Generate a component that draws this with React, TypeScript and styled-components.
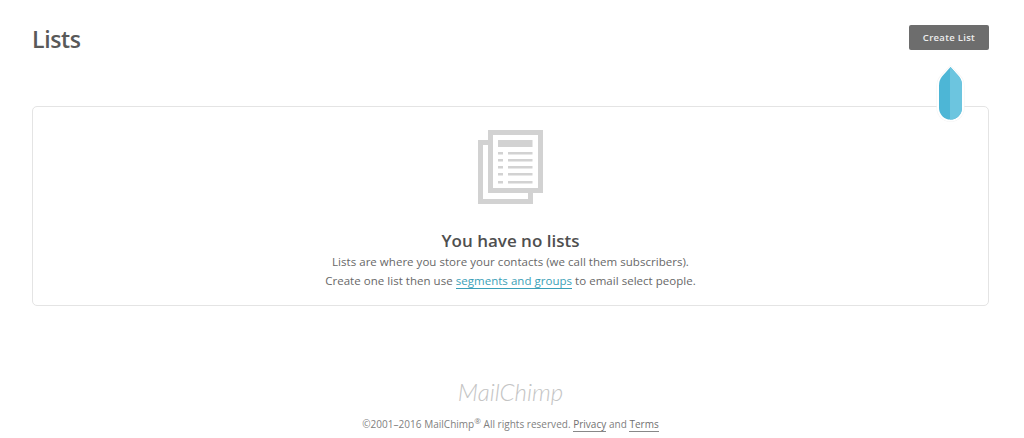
import React from 'react';
import styled, { createGlobalStyle } from 'styled-components';

const GlobalStyle = createGlobalStyle`
  html, body {
    margin: 0;
    padding: 0;
    background: #fff;
    font-family: "Open Sans", "Liberation Sans", sans-serif;
    color: #5a5a5a;
  }
`;

const Page = styled.div`
  position: relative;
  width: 1024px;
  height: 438px;
  overflow: hidden;
  box-sizing: border-box;
  padding: 25px 35px 0 32px;
`;

const Header = styled.header`
  display: flex;
  justify-content: space-between;
  align-items: center;
  height: 25px;
`;

const Title = styled.h1`
  margin: 2px 0 0;
  font-size: 23px;
  line-height: 28px;
  font-weight: 600;
  letter-spacing: -0.35px;
  color: #595959;
`;

const CreateButton = styled.button`
  width: 80px;
  height: 25px;
  border: 0;
  border-radius: 2px;
  background: #6d6d6d;
  color: #eeeeee;
  font-family: inherit;
  font-size: 9.500px;
  font-weight: 600;
  letter-spacing: 0.3px;
  padding: 0;
`;

const Pin = styled.svg`
  position: absolute;
  left: 936px;
  top: 65px;
`;

const Card = styled.section`
  margin-top: 56px;
  height: 200px;
  box-sizing: border-box;
  border: 1px solid #e4e4e4;
  border-radius: 5px;
  padding-top: 23px;
  display: flex;
  flex-direction: column;
  align-items: center;
`;

const EmptyIcon = styled.svg`
  display: block;
  margin-left: 1px;
`;

const Heading = styled.h2`
  margin: 24px 0 0;
  font-size: 17px;
  line-height: 25px;
  font-weight: 600;
  color: #4f4f4f;
`;

const Body = styled.p`
  margin: -1px 0 0;
  font-size: 11.5px;
  line-height: 19px;
  text-align: center;
  color: #686868;
  letter-spacing: 0.03px;
`;

const TealLink = styled.a`
  color: #3a9fb8;
  border-bottom: 1px solid #3a9fb8;
`;

const Footer = styled.footer`
  margin-top: 71px;
  display: flex;
  flex-direction: column;
  align-items: center;
`;

const Wordmark = styled.div`
  font-family: "Lato", sans-serif;
  font-style: italic;
  font-weight: 300;
  font-size: 24px;
  line-height: 30px;
  color: #c4c4c4;
`;

const Legal = styled.p`
  margin: 9px 0 0;
  font-size: 10px;
  line-height: 16px;
  color: #808080;
  letter-spacing: 0.02px;

  sup {
    font-size: 8px;
    line-height: 0;
  }
`;

const LegalLink = styled.a`
  color: #707070;
  border-bottom: 1px solid #888;
`;

const rows = [22, 29, 36, 43, 51];

const App: React.FC = () => {
  return (
    <Page>
      <GlobalStyle />
      <Header>
        <Title>Lists</Title>
        <CreateButton>Create List</CreateButton>
      </Header>
      <Card>
        <EmptyIcon width="66" height="74" viewBox="0 0 66 74">
          <path d="M10 12.500H2.500V71.500H52.500V63" fill="none" stroke="#d2d2d2" strokeWidth="5" />
          <rect x="12.500" y="2.500" width="50" height="58" fill="#fff" stroke="#d2d2d2" strokeWidth="5" />
          <rect x="20" y="10" width="34.500" height="7" fill="#d2d2d2" />
          {rows.map(y => (
            <g key={y} fill="#d2d2d2">
              <rect x="20" y={y} width="5" height="2.500" />
              <rect x="30" y={y} width="24.500" height="2.500" />
            </g>
          ))}
        </EmptyIcon>
        <Heading>You have no lists</Heading>
        <Body>
          Lists are where you store your contacts (we call them subscribers).
          <br />
          Create one list then use <TealLink>segments and groups</TealLink> to email select people.
        </Body>
      </Card>
      <Footer>
        <Wordmark>MailChimp</Wordmark>
        <Legal>
          ©2001–2016 MailChimp<sup>®</sup> All rights reserved. <LegalLink>Privacy</LegalLink> and <LegalLink>Terms</LegalLink>
        </Legal>
      </Footer>
      <Pin width="30" height="60" viewBox="0 0 30 60">
        <path d="M14.500 0L25 11Q28.500 15 28.500 21V43A14 14 0 0 1 0.500 43V21Q0.500 15 4 11Z" fill="#f4f4f4" />
        <path d="M14.500 0.500L24.500 11.500Q28 15 28 21V43A13.500 13.500 0 0 1 1 43V21Q1 15 4.500 11.500Z" fill="#fff" />
        <path d="M14.500 2L23 11.500Q26 15 26 21V43A11.500 11.500 0 0 1 3 43V21Q3 15 6 11.500Z" fill="#4db6d6" />
        <path d="M14 2.500L14.500 2L23 11.500Q26 15 26 21V43A11.500 11.500 0 0 1 14 54.500Z" fill="#6cc5df" />
      </Pin>
    </Page>
  );
};

export default App;
